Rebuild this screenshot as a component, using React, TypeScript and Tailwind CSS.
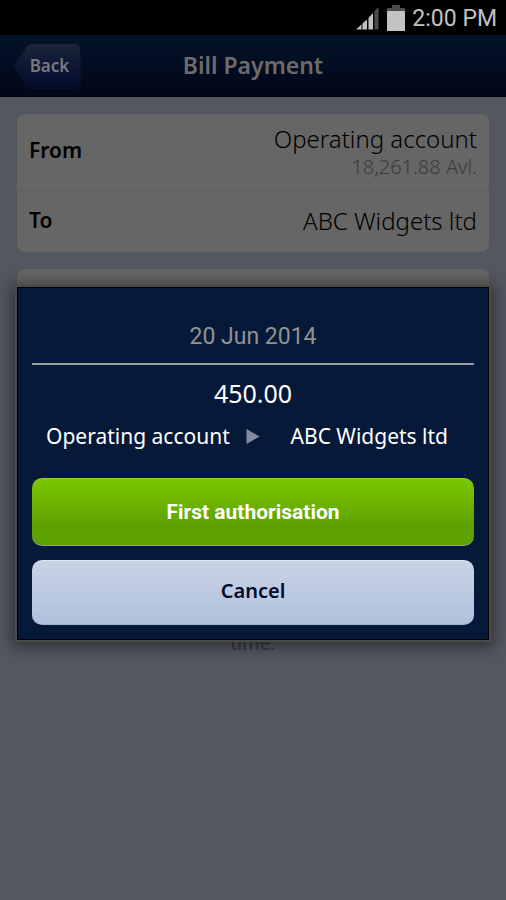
import type { ReactNode } from 'react'

function StatusBar() {
  return (
    <div className="flex h-[35px] items-center justify-end bg-black pr-[9px] font-[Roboto,sans-serif] text-[23px] leading-[35px] text-[#c2c2c2]">
      <svg className="mt-px mr-2 h-[24px] w-[23px]" viewBox="0 0 23 24" aria-hidden="true">
        <path d="M0 23.500 L5.500 18.500 V23.500Z M6.500 17.500 L11 13.500 V23.500 H6.500Z M12.500 12 L17 7 V23.500 H12.500Z" fill="#c2c2c2" />
        <path d="M18.500 5 L22.500 1 V23.500 H18.500Z" fill="#4d4d4d" />
      </svg>
      <svg className="mr-[7px] h-[26px] w-[18px]" viewBox="0 0 18 26" aria-hidden="true">
        <path d="M5 0 H13 V3 H18 V6 H0 V3 H5Z" fill="#4d4d4d" />
        <path d="M0 6 H18 V26 H0Z" fill="#c2c2c2" />
      </svg>
      <span className="pt-px">2:00 PM</span>
    </div>
  )
}

function Header() {
  return (
    <header className="grid h-[62px] grid-cols-[1fr_auto_1fr] items-center border-b border-[#02040f] bg-linear-to-b from-[#021328] to-[#020719] px-[14px] font-['Noto_Sans',sans-serif]">
      <button type="button" className="relative h-[46px] w-[67px] pl-1 text-[17px] font-semibold text-[#77797e]">
        <svg className="absolute inset-0 h-full w-full" viewBox="0 0 67 46" aria-hidden="true">
          <defs>
            <linearGradient id="back" x1="0" y1="0" x2="0" y2="1">
              <stop offset="0" stopColor="#1b2439" />
              <stop offset="0.600" stopColor="#0b1531" />
              <stop offset="1" stopColor="#020b2b" />
            </linearGradient>
          </defs>
          <path
            d="M18 0.500 H60 Q66.500 0.500 66.500 7 V39 Q66.500 45.500 60 45.500 H18 Q14 45.500 12 42 L1 25 Q0 23 1 21 L12 4 Q14 0.500 18 0.500Z"
            fill="url(#back)"
            stroke="#0b1228"
          />
        </svg>
        <span className="relative">Back</span>
      </button>
      <h1 className="text-[23px] font-semibold text-[#6c6c6c]">Bill Payment</h1>
    </header>
  )
}

function Row({ label, children }: { label: string; children: ReactNode }) {
  return (
    <div className="flex items-center justify-between px-3 pb-[2px]">
      <dt className="text-[21px] font-semibold">{label}</dt>
      <dd className="text-right text-[24px] leading-[32px] font-light">{children}</dd>
    </div>
  )
}

function AuthorisationDialog() {
  return (
    <div
      role="dialog"
      aria-label="Authorise payment"
      className="absolute inset-x-[17px] top-[287px] border border-black bg-[#061938] px-[14px] pt-[29px] pb-[14px] text-center text-white shadow-[0_0_0_2px_#4a4a48,0_2px_14px_5px_rgba(0,0,0,0.45)]"
    >
      <p className="border-b-2 border-[#9c9a9f] pb-[6px] font-[Roboto,sans-serif] text-[23px] leading-[40px] text-[#929292]">
        20 Jun 2014
      </p>
      <p className="mt-[11px] text-[25px] leading-[34px]">450.00</p>
      <div className="mt-[10px] flex items-center px-[14px] text-[21px] leading-[32px]">
        <span>Operating account</span>
        <svg className="ml-4 h-[15px] w-[14px]" viewBox="0 0 14 15" aria-hidden="true">
          <path d="M0.500 0 L13.500 7.500 L0.500 15Z" fill="#838b9c" />
        </svg>
        <span className="ml-auto pr-3">ABC Widgets ltd</span>
      </div>
      <button
        type="button"
        className="mt-[26px] block h-[68px] w-full rounded-[10px] border-y border-t-[#8fd12c] border-b-[#8fa390] bg-linear-to-b from-[#7bc700] via-[#5fa200] via-70% to-[#5fa200] pt-[2px] font-[Roboto,sans-serif] text-[21px] font-bold"
      >
        First authorisation
      </button>
      <button
        type="button"
        className="mt-[14px] block h-[65px] w-full rounded-[10px] border-y border-t-[#dfe5f1] border-b-[#a3b3ca] bg-linear-to-b from-[#c9d3e6] to-[#b0c1dc] pb-[3px] text-[20px] font-semibold text-[#020a2d]"
      >
        Cancel
      </button>
    </div>
  )
}

export default function App() {
  return (
    <div className="relative min-h-screen bg-[#53575f] font-['Noto_Sans',sans-serif] text-black">
      <StatusBar />
      <Header />
      <main className="px-[17px] pt-[17px]">
        <dl className="grid grid-rows-[77px_61px] divide-y divide-[#5b5c5e] rounded-lg bg-[#666]">
          <Row label="From">
            Operating account
            <span className="block text-[20px] leading-[24px] text-[#3c3c3c]">18,261.88 Avl.</span>
          </Row>
          <Row label="To">ABC Widgets ltd</Row>
        </dl>
        <div className="mt-[17px] h-[340px] rounded-lg bg-[#666]" />
        <p className="mt-[20px] text-center text-[19px] leading-[28px] text-[#36393f]">time.</p>
      </main>
      <AuthorisationDialog />
    </div>
  )
}
